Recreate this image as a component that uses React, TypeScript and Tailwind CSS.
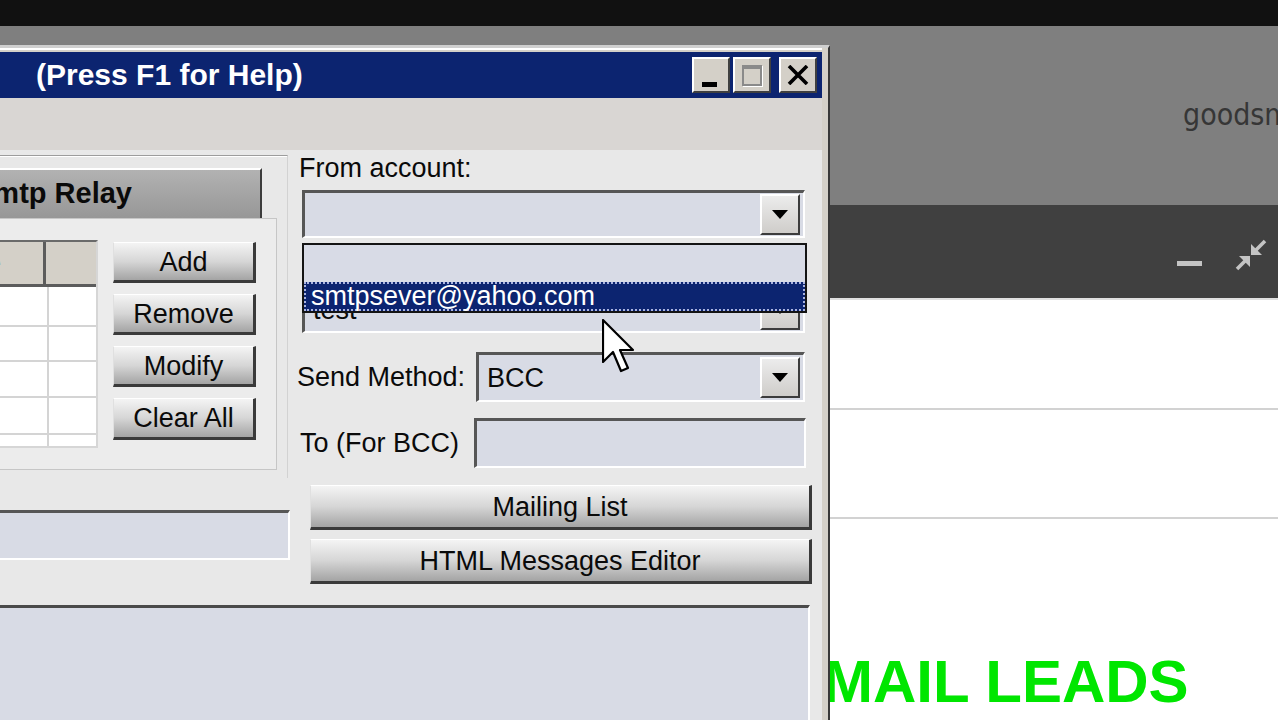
import React from "react";

const FONT = "font-['Liberation_Sans',Arial,sans-serif]";

function DropBtn() {
  return (
    <div className="w-[40px] h-[41px] shrink-0 mr-[3px] bg-gradient-to-b from-[#ececec] to-[#cfcdca] border-t-2 border-l-2 border-t-white border-l-white border-b-2 border-r-2 border-b-[#3c3c3c] border-r-[#3c3c3c] flex items-center justify-center">
      <svg width="16" height="9" viewBox="0 0 16 9">
        <path d="M0 0 L16 0 L8 9 Z" fill="#000" />
      </svg>
    </div>
  );
}

function Combo({ w, h, text }: { w: string; h: string; text?: string }) {
  return (
    <div
      className={`${w} ${h} flex items-center bg-[#d8dbe5] border-t-[3px] border-l-[3px] border-t-[#565656] border-l-[#565656] border-b-2 border-r-2 border-b-white border-r-white`}
    >
      <span className="flex-1 pl-[8px] text-[27px] leading-[30px] whitespace-nowrap">{text}</span>
      <DropBtn />
    </div>
  );
}

function GrayButton({ label, cls }: { label: string; cls: string }) {
  return (
    <div
      className={`${cls} flex items-center justify-center text-[27px] leading-[30px] bg-gradient-to-b from-[#f4f4f4] via-[#d6d6d6] to-[#a4a4a4] border-t border-l border-t-white border-l-[#e0e0e0] border-b-[3px] border-r-[3px] border-b-[#3a3a3a] border-r-[#3a3a3a]`}
    >
      {label}
    </div>
  );
}

function TitleBtn({ children }: { children: React.ReactNode }) {
  return (
    <div className="w-[38px] h-[36px] bg-[#d4d0c8] border-t-2 border-l-2 border-t-white border-l-white border-b-2 border-r-2 border-b-[#404040] border-r-[#404040] flex items-center justify-center">
      {children}
    </div>
  );
}

function Table() {
  const rows = [40, 35, 36, 37, 13];
  return (
    <div className="w-[98px] h-[208px] shrink-0 flex flex-col bg-white border-t-2 border-t-[#6a6a6a] border-r-2 border-r-[#d6d6d6] border-b-2 border-b-[#d6d6d6] overflow-hidden">
      <div className="h-[45px] shrink-0 flex bg-[#d4d0c8] border-b-[3px] border-b-[#5c5c5c]">
        <div className="w-[46px] shrink-0 overflow-hidden flex justify-end items-center border-r-[3px] border-r-[#5c5c5c]">
          <span className="whitespace-nowrap text-[27px] leading-[30px] pr-[42px]">Name</span>
        </div>
        <div className="flex-1" />
      </div>
      {rows.map((h, i) => (
        <div
          key={i}
          className="flex shrink-0 border-b-2 border-b-[#d4d4d4]"
          style={{ height: h }}
        >
          <div className="w-[49px] shrink-0 border-r-2 border-r-[#d4d4d4]" />
          <div className="flex-1" />
        </div>
      ))}
    </div>
  );
}

function Window() {
  return (
    <div className="relative flex-1 min-h-0 flex flex-col bg-[#d4d0c8] border-t-[3px] border-t-[#cfcfcf] border-r-2 border-r-[#383838] pr-[6px]">
      <div className="h-[2px] shrink-0 bg-white" />
      <div className="h-[2px] shrink-0" />
      {/* title bar */}
      <div className="h-[46px] shrink-0 bg-[#0c2470] flex items-center pl-[36px] pr-[5px]">
        <span className="text-white font-bold text-[30px] leading-[32px] whitespace-nowrap">(Press F1 for Help)</span>
        <div className="ml-auto flex items-center">
          <TitleBtn>
            <div className="w-[15px] h-[5px] bg-black mt-[18px] mr-[4px]" />
          </TitleBtn>
          <div className="w-[3px]" />
          <TitleBtn>
            <div className="w-[20px] h-[21px] border-[2px] border-t-[4px] border-[#8a8a8a] shadow-[1px_1px_0_#ffffff]" />
          </TitleBtn>
          <div className="w-[8px]" />
          <TitleBtn>
            <svg width="22" height="20" viewBox="0 0 22 20">
              <path d="M2 1 L20 19 M20 1 L2 19" stroke="#000" strokeWidth="3.6" />
            </svg>
          </TitleBtn>
        </div>
      </div>
      {/* menu strip */}
      <div className="h-[52px] shrink-0 bg-[#d9d6d3]" />
      {/* content */}
      <div className="relative flex-1 min-h-0 flex flex-col bg-[#e8e8e8] overflow-hidden">
        {/* section A */}
        <div className="h-[328px] shrink-0 flex">
          <div className="w-[290px] shrink-0">
            <div className="mt-[5px] w-[288px] h-[323px] border-t border-r border-t-[#9c9c9c] border-r-[#d2d2d2] shadow-[inset_0_1px_0_#ffffff] pt-[12px]">
              <div className="w-[262px] h-[50px] overflow-hidden border-t-2 border-t-white border-r-2 border-r-[#3c3c3c] bg-gradient-to-b from-[#b2b2b2] to-[#979797]">
                <div className="ml-[-26px] whitespace-nowrap font-bold text-[29px] leading-[46px]">Smtp Relay</div>
              </div>
              <div className="w-[277px] h-[252px] bg-[#ececec] border-t border-r border-b border-[#c6c6c6] flex pt-[21px]">
                <Table />
                <div className="ml-[15px] flex flex-col gap-[11px] pt-[2px]">
                  <GrayButton label="Add" cls="w-[143px] h-[41px]" />
                  <GrayButton label="Remove" cls="w-[143px] h-[41px]" />
                  <GrayButton label="Modify" cls="w-[143px] h-[41px]" />
                  <GrayButton label="Clear All" cls="w-[143px] h-[42px]" />
                </div>
              </div>
            </div>
          </div>
          <div className="flex-1 pl-[7px] flex flex-col">
            <div className="mt-[3px] h-[30px] pl-[2px] text-[27px] leading-[30px] whitespace-nowrap">From account:</div>
            <div className="mt-[7px] ml-[5px]">
              <Combo w="w-[503px]" h="h-[48px]" />
            </div>
            <div className="mt-[47px] ml-[5px]">
              <Combo w="w-[503px]" h="h-[48px]" text="test" />
            </div>
            <div className="mt-[19px] h-[50px] flex items-center">
              <div className="w-[179px] shrink-0 text-[27px] leading-[30px] whitespace-nowrap">Send Method:</div>
              <Combo w="w-[329px]" h="h-[50px]" text="BCC" />
            </div>
            <div className="mt-[16px] h-[50px] flex items-center">
              <div className="w-[177px] shrink-0 pl-[3px] text-[27px] leading-[30px] whitespace-nowrap">To (For BCC)</div>
              <div className="w-[332px] h-[50px] bg-[#d8dbe5] border-t-[3px] border-l-[3px] border-t-[#565656] border-l-[#565656] border-b-2 border-r-2 border-b-white border-r-white" />
            </div>
          </div>
        </div>
        {/* section B */}
        <div className="h-[107px] shrink-0 flex">
          <div className="w-[290px] shrink-0 pt-[32px]">
            <div className="w-[290px] h-[50px] bg-[#d8dbe5] border-t-[3px] border-t-[#565656] border-b-2 border-b-white border-r-2 border-r-white" />
          </div>
          <div className="pl-[20px] pt-[7px] flex flex-col gap-[9px]">
            <GrayButton label="Mailing List" cls="w-[502px] h-[45px]" />
            <GrayButton label="HTML Messages Editor" cls="w-[502px] h-[45px]" />
          </div>
        </div>
        {/* section C */}
        <div className="mt-[20px] w-[810px] flex-1 bg-[#d8dbe5] border-t-[3px] border-t-[#4a4a4a] border-r-2 border-r-white" />

        {/* open dropdown list overlay */}
        <div className="absolute left-[302px] top-[93px] w-[505px] h-[70px] border-2 border-[#141414] bg-[#d8dbe6] flex flex-col">
          <div className="h-[37px] shrink-0" />
          <div className="h-[29px] shrink-0 bg-[#0c2470] border-2 border-dotted border-[#aab4e0] flex items-center">
            <span className="pl-[5px] text-white text-[27px] leading-[27px] whitespace-nowrap">smtpsever@yahoo.com</span>
          </div>
        </div>
      </div>
    </div>
  );
}

function RightPane() {
  return (
    <div className="flex-1 min-w-0 flex flex-col overflow-hidden">
      <div className="h-[179px] shrink-0 bg-[#7f7f7f] overflow-hidden">
        <div className="pl-[353px] pt-[71px] whitespace-nowrap text-[30px] leading-[36px] text-[#363636] font-['DejaVu_Sans_Condensed','DejaVu_Sans',sans-serif]">
          goodsmtp
        </div>
      </div>
      <div className="h-[93px] shrink-0 bg-[#404040] flex items-start">
        <div className="ml-[347px] mt-[56px] w-[25px] h-[5px] bg-[#c4c4c4]" />
        <div className="ml-[33px] mt-[34px]">
          <svg width="32" height="32" viewBox="0 0 32 32">
            <g stroke="#c4c4c4" strokeWidth="3.5" fill="none">
              <path d="M30 2 L20 12" />
              <path d="M2 30 L12 20" />
            </g>
            <path d="M16 16 L16 5 L27 16 Z" fill="#c4c4c4" />
            <path d="M15 17 L15 28 L4 17 Z" fill="#c4c4c4" />
          </svg>
        </div>
      </div>
      <div className="flex-1 bg-white flex flex-col border-t-2 border-t-[#e0e0e0]">
        <div className="h-[108px] shrink-0" />
        <div className="h-[2px] shrink-0 bg-[#d2d2d2]" />
        <div className="h-[107px] shrink-0" />
        <div className="h-[2px] shrink-0 bg-[#d2d2d2]" />
        <div className="h-[133px] shrink-0" />
        <div className="ml-[-47px] whitespace-nowrap font-bold text-[60px] leading-[60px] text-[#00e600]">EMAIL LEADS</div>
      </div>
    </div>
  );
}

export default function App() {
  return (
    <div className={`relative w-[1278px] h-[720px] overflow-hidden bg-[#111111] flex flex-col text-[#0a0a0a] ${FONT}`}>
      <div className="h-[26px] shrink-0 bg-[#111111]" />
      <div className="flex-1 min-h-0 flex">
        <div className="w-[830px] shrink-0 flex flex-col z-10">
          <div className="h-[19px] shrink-0 bg-[#7f7f7f]" />
          <Window />
        </div>
        <RightPane />
      </div>
      {/* mouse cursor */}
      <svg className="absolute left-[602px] top-[319px] z-20" width="34" height="56" viewBox="-1 -1 34 56">
        <path d="M0 0 L0 42 L10 32 L18 51 L25 48 L17 30 L30 30 Z" fill="#fff" stroke="#000" strokeWidth="2.2" strokeLinejoin="round" />
      </svg>
    </div>
  );
}
